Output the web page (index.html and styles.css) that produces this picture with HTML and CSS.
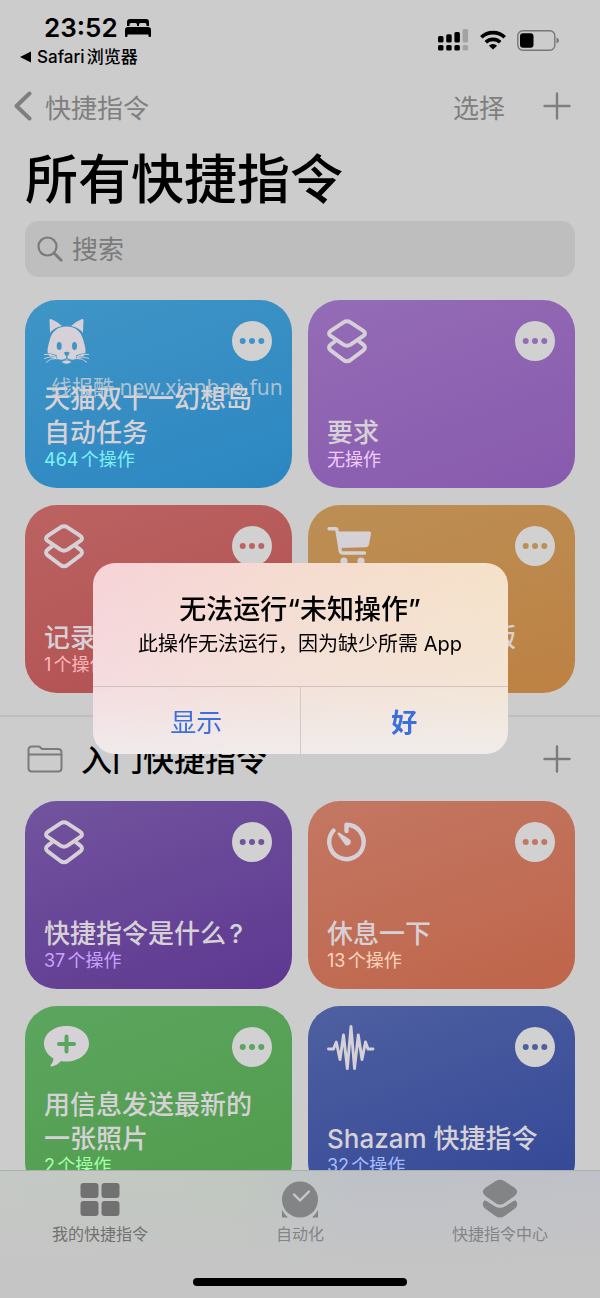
FILE: index.html
```html
<!DOCTYPE html>
<html lang="zh-CN">
<head>
    <meta charset="UTF-8" />
    <meta name="viewport" content="width=device-width, initial-scale=1.0" />
    <title>快捷指令</title>
    <link rel="stylesheet" href="styles.css">
</head>
<body>
    <svg class="sprite" aria-hidden="true">
      <symbol id="layers" viewBox="0 0 40 45">
        <g fill="none" stroke="currentColor" stroke-width="4" stroke-linejoin="round">
          <path d="M16.500 3.400Q20 1.200 23.500 3.400L36 11.600Q40 14.400 36 17.200L23.500 25.600Q20 27.800 16.500 25.600L4 17.200Q0 14.400 4 11.600Z" />
          <path d="M8.500 22L4 25.400Q0 28.500 4 31.600L16.500 41Q20 43.500 23.500 41L36 31.600Q40 28.500 36 25.400L31.500 22" />
        </g>
      </symbol>
      <symbol id="plus" viewBox="0 0 28 28">
        <path d="M14 1.500V26.500M1.500 14H26.500" fill="none" stroke="currentColor" stroke-width="2.400" stroke-linecap="round" />
      </symbol>
      <symbol id="dots" viewBox="0 0 40 40">
        <circle cx="10.700" cy="20" r="3" /><circle cx="20" cy="20" r="3" /><circle cx="29.300" cy="20" r="3" />
      </symbol>
    </svg>

    <div class="app">
      <main class="content">
        <header class="status">
          <div class="status-left">
            <div class="clock">
              23:52
              <svg width="26" height="18" viewBox="0 0 26 18">
                <path d="M2 7V3Q2 0 5 0H21Q24 0 24 3V7H21.500V5.500Q21.500 4 20 4H15.500Q14 4 14 5.500V7H12V5.500Q12 4 10.500 4H6Q4.500 4 4.500 5.500V7Z" />
                <path d="M0 11Q0 8 3 8H23Q26 8 26 11V17Q26 18 25 18H24.500Q23.500 18 23.500 17V15.500H2.500V17Q2.500 18 1.500 18H1Q0 18 0 17Z" />
              </svg>
            </div>
            <a class="back-app" href="#">
              <svg width="12" height="12" viewBox="0 0 12 12"><path d="M0 6L11 .5V11.500Z" /></svg>
              Safari浏览器
            </a>
          </div>
          <div class="status-right">
            <svg width="31" height="22" viewBox="0 0 31 22">
              <rect x="0" y="7" width="5.500" height="6.500" rx="1.500" />
              <rect x="8.200" y="5.200" width="5.500" height="8.300" rx="1.500" />
              <rect x="16.400" y="3" width="5.500" height="10.500" rx="1.500" />
              <rect x="0" y="16" width="5.500" height="5.500" rx="1.500" />
              <rect x="8.200" y="16" width="5.500" height="5.500" rx="1.500" />
              <rect x="16.400" y="16" width="5.500" height="5.500" rx="1.500" />
              <g fill="#a3a3a3">
                <rect x="24.600" y="0" width="5.500" height="13.500" rx="1.500" />
                <rect x="24.600" y="16" width="5.500" height="5.500" rx="1.500" />
              </g>
            </svg>
            <svg width="26" height="20" viewBox="0 0 26 20">
              <g fill="none" stroke="#000" stroke-width="3.600">
                <path d="M1.300 7.300A17 17 0 0 1 24.700 7.300" />
                <path d="M5.800 12.200A10.500 10.500 0 0 1 20.200 12.200" />
              </g>
              <path d="M13 19.500L8.900 15.700A6 6 0 0 1 17.100 15.700Z" />
            </svg>
            <svg width="42" height="21" viewBox="0 0 42 21">
              <rect x=".8" y=".8" width="37" height="19.400" rx="5" fill="none" stroke="#777" stroke-width="1.400" />
              <rect x="3" y="3.200" width="13.500" height="14.600" rx="3" />
              <path d="M39.500 7.500Q42 8.500 42 10.500T39.500 13.500Z" fill="#777" />
            </svg>
          </div>
        </header>

        <nav class="navbar">
          <a class="nav-back" href="#">
            <svg width="18" height="30" viewBox="0 0 18 30"><path d="M15.500 2.500L2.500 15L15.500 27.500" fill="none" stroke="currentColor" stroke-width="4" stroke-linecap="round" stroke-linejoin="round" /></svg>
            快捷指令
          </a>
          <div class="nav-actions">
            <button>选择</button>
            <button aria-label="新建"><svg width="28" height="28"><use href="#plus" /></svg></button>
          </div>
        </nav>

        <h1>所有快捷指令</h1>

        <label class="search">
          <svg width="26" height="26" viewBox="0 0 26 26"><g fill="none" stroke="currentColor" stroke-width="2.200" stroke-linecap="round"><circle cx="10.500" cy="10.500" r="9" /><path d="M17.200 17.200L24.200 24.200" stroke-width="2.800" /></g></svg>
          <input type="search" placeholder="搜索" aria-label="搜索" />
        </label>

        <section class="grid">
          <article class="card blue">
            <div class="card-top">
              <svg class="icon" width="46" height="45" viewBox="0 0 46 45">
                <path d="M6 12L5.500 1.500Q5.500 -.5 7.500 .3Q14 3 18 7Q10 8.500 6 14Z" />
                <path d="M39 12L39.500 1.500Q39.500 -.5 37.500 .3Q31 3 27 7Q35 8.500 39 14Z" />
                <path d="M22.500 7.500C32 7.500 37 13 39 20C40 24 41.500 28 41.500 32C41.500 38 35 41.500 22.500 41.500S3.500 38 3.500 32C3.500 28 5 24 6 20C8 13 13 7.500 22.500 7.500Z" />
                <g class="hole">
                  <ellipse cx="15.200" cy="27" rx="2.500" ry="4" /><ellipse cx="30.500" cy="27" rx="2.500" ry="4" />
                  <path d="M20 33.500Q22.800 32 25.600 33.500Q25 36.500 22.800 37.500Q20.600 36.500 20 33.500Z" />
                </g>
                <path class="hole-line" d="M2 34.500Q8 34.500 13 37M2 38.500Q8 37 13 39M43 34.500Q37 34.500 32 37M43 38.500Q37 37 32 39M22.800 37V39.500Q19 42.500 13 40.500M22.800 39.500Q27 42.500 33 40.500" fill="none" stroke-width="1.200" />
                <path d="M0 35.500Q5 34.500 11 37M0 39.500Q6 37 12 38.500M2 43.500Q6 39 12 39.500M45 35.500Q40 34.500 34 37M45 39.500Q39 37 33 38.500M43 43.500Q39 39 33 39.500" fill="none" stroke="currentColor" stroke-width=".9" />
                <path d="M17.500 43Q22.500 40.500 27.500 43Q22.500 46.500 17.500 43Z" />
              </svg>
              <button class="more" aria-label="更多"><svg width="40" height="40"><use href="#dots" /></svg></button>
            </div>
            <h3>天猫双十一幻想岛自动任务</h3>
            <p>464个操作</p>
            <span class="watermark">线报酷 new.xianbao.fun</span>
          </article>

          <article class="card purple">
            <div class="card-top">
              <svg class="icon" width="40" height="45"><use href="#layers" /></svg>
              <button class="more" aria-label="更多"><svg width="40" height="40"><use href="#dots" /></svg></button>
            </div>
            <h3>要求</h3>
            <p>无操作</p>
          </article>

          <article class="card red">
            <div class="card-top">
              <svg class="icon" width="40" height="45"><use href="#layers" /></svg>
              <button class="more" aria-label="更多"><svg width="40" height="40"><use href="#dots" /></svg></button>
            </div>
            <h3>记录</h3>
            <p>1个操作</p>
          </article>

          <article class="card orange">
            <div class="card-top">
              <svg class="icon" width="46" height="45" viewBox="0 0 46 45">
                <path d="M2 4.700H8.500Q9.800 4.700 10 6.500L13.300 27Q13.700 29 15.500 29H37.500" fill="none" stroke="currentColor" stroke-width="3.400" stroke-linecap="round" />
                <path d="M9 7.500H42.500Q44.300 7.500 44 9.500L42 20.500Q41.500 23 39 23.200L12 24Z" />
                <circle cx="17" cy="37" r="3.600" /><circle cx="34" cy="37" r="3.600" />
              </svg>
              <button class="more" aria-label="更多"><svg width="40" height="40"><use href="#dots" /></svg></button>
            </div>
            <h3>双十一 购物车版</h3>
            <p>5个操作</p>
          </article>
        </section>

        <section class="folder">
          <div class="folder-head">
            <svg width="36" height="28" viewBox="0 0 36 28"><path d="M1.500 5Q1.500 1.500 5 1.500H11Q12.500 1.500 13.500 2.500L15 4H31Q34.500 4 34.500 7.500V23Q34.500 26.500 31 26.500H5Q1.500 26.500 1.500 23ZM1.500 9.500H34.500" fill="none" stroke="currentColor" stroke-width="2" /></svg>
            <h2>入门快捷指令</h2>
            <button aria-label="新建"><svg width="28" height="28"><use href="#plus" /></svg></button>
          </div>

          <div class="grid">
            <article class="card violet">
              <div class="card-top">
                <svg class="icon" width="40" height="45"><use href="#layers" /></svg>
                <button class="more" aria-label="更多"><svg width="40" height="40"><use href="#dots" /></svg></button>
              </div>
              <h3>快捷指令是什么?</h3>
              <p>37个操作</p>
            </article>

            <article class="card coral">
              <div class="card-top">
                <svg class="icon" width="40" height="45" viewBox="0 0 40 45">
                  <path d="M19.500 11V4.700A17.200 17.200 0 1 1 6.500 10.600" fill="none" stroke="currentColor" stroke-width="4.400" stroke-linecap="round" stroke-linejoin="round" />
                  <path d="M10.500 14Q10.500 12 12.500 12.800L22.800 19.500A3.600 3.600 0 0 1 18.300 25Z" />
                </svg>
                <button class="more" aria-label="更多"><svg width="40" height="40"><use href="#dots" /></svg></button>
              </div>
              <h3>休息一下</h3>
              <p>13个操作</p>
            </article>

            <article class="card green">
              <div class="card-top">
                <svg class="icon" width="46" height="45" viewBox="0 0 46 45">
                  <path d="M22.500 1C35 1 45 8.500 45 18.500S35 36.500 22.500 36.500Q19.500 36.500 17 36Q13 40.500 7.500 41.500Q5.500 41.500 7 39.500Q9.500 36.500 9.500 33.500C4 30.500 0 25 0 18.500C0 8.500 10 1 22.500 1Z" />
                  <path class="hole-line" d="M22.500 11.500V26.500M15 19H30" fill="none" stroke-width="4" stroke-linecap="round" />
                </svg>
                <button class="more" aria-label="更多"><svg width="40" height="40"><use href="#dots" /></svg></button>
              </div>
              <h3>用信息发送最新的一张照片</h3>
              <p>2个操作</p>
            </article>

            <article class="card indigo">
              <div class="card-top">
                <svg class="icon" width="48" height="46" viewBox="0 0 48 46">
                  <path d="M1.500 24H6.500L9.300 17L13 34.500L16.500 10L20.300 43.500L24 1.500L27.500 43.500L31.300 10L35 34.500L38.500 17L41 24H46" fill="none" stroke="currentColor" stroke-width="2.900" stroke-linecap="round" stroke-linejoin="round" />
                </svg>
                <button class="more" aria-label="更多"><svg width="40" height="40"><use href="#dots" /></svg></button>
              </div>
              <h3>Shazam 快捷指令</h3>
              <p>32个操作</p>
            </article>
          </div>
        </section>
      </main>

      <footer class="tabbar">
        <nav class="tabs">
          <a class="tab active" href="#">
            <svg width="40" height="40" viewBox="0 0 40 40"><rect x=".5" y="4" width="18" height="15" rx="3" /><rect x="21.500" y="4" width="18" height="15" rx="3" /><rect x=".5" y="22" width="18" height="15" rx="3" /><rect x="21.500" y="22" width="18" height="15" rx="3" /></svg>
            我的快捷指令
          </a>
          <a class="tab" href="#">
            <svg width="40" height="40" viewBox="0 0 40 40">
              <circle cx="20" cy="20.500" r="18" />
              <path d="M2 31Q4 35 8 38.500H2ZM38 31Q36 35 32 38.500H38Z" />
              <path d="M14 15.500L20 21.500L29 12.500" fill="none" stroke="#c6cac9" stroke-width="2.400" stroke-linecap="round" stroke-linejoin="round" />
            </svg>
            自动化
          </a>
          <a class="tab" href="#">
            <svg width="40" height="42" viewBox="0 0 40 42">
              <path d="M15.500 2Q20 -.5 24.500 2L35 9Q41 13.500 35 18L24.500 25.500Q20 28.500 15.500 25.500L5 18Q-1 13.500 5 9Z" />
              <path d="M3.500 22.500Q5.500 22.500 7 23.800L14.500 28.500Q20 32 25.500 28.500L33 23.800Q34.500 22.500 36.500 22.500Q40.500 27.500 35 31.500L24.500 39Q20 42 15.500 39L5 31.500Q-.5 27.500 3.500 22.500Z" />
            </svg>
            快捷指令中心
          </a>
        </nav>
        <div class="home-bar"></div>
      </footer>
    </div>

    <div class="overlay">
      <div class="alert" role="alertdialog" aria-labelledby="alertTitle" aria-describedby="alertText">
        <div class="alert-body">
          <h2 id="alertTitle">无法运行“未知操作”</h2>
          <p id="alertText">此操作无法运行，因为缺少所需 App</p>
        </div>
        <div class="alert-buttons">
          <button>显示</button>
          <button class="primary">好</button>
        </div>
      </div>
    </div>
</body>
</html>
```

FILE: styles.css
```css
* {
    box-sizing: border-box;
}

body {
    margin: 0;
    background: #cccccc;
    color: #000;
    font-family: Inter, "Noto Sans CJK SC", sans-serif;
    text-autospace: normal;
}

h1, h2, h3, p {
    margin: 0;
}

a {
    color: inherit;
    text-decoration: none;
}

button {
    padding: 0;
    border: none;
    background: none;
    color: inherit;
    font: inherit;
    cursor: pointer;
}

svg {
    display: block;
    flex: none;
    fill: currentColor;
}

.sprite {
    position: absolute;
    width: 0;
    height: 0;
}

.app {
    display: flex;
    flex-direction: column;
    height: 100vh;
}

.content {
    flex: 1;
    min-height: 0;
    overflow: hidden;
}

/* status bar */
.status {
    display: flex;
    justify-content: space-between;
    height: 78px;
    padding: 13px 41px 0 20px;
}

.clock {
    display: flex;
    align-items: center;
    gap: 7px;
    padding-left: 24px;
    font-size: 26px;
    font-weight: 600;
    line-height: 30px;
}

.back-app {
    display: flex;
    align-items: center;
    gap: 5px;
    font-size: 17px;
    font-weight: 500;
    line-height: 28px;
}

.status-right {
    display: flex;
    align-items: center;
    gap: 11px;
    height: 54px;
}

/* navigation */
.navbar {
    display: flex;
    align-items: center;
    justify-content: space-between;
    height: 56px;
    padding: 0 29px 0 14px;
    color: #7f7f7f;
    font-size: 26px;
}

.nav-back {
    display: flex;
    align-items: center;
    gap: 13px;
}

.nav-actions {
    display: flex;
    align-items: center;
    gap: 38px;
}

h1 {
    padding: 14px 25px 0;
    font-size: 53px;
    font-weight: 500;
    line-height: 64px;
}

.search {
    display: flex;
    align-items: center;
    gap: 9px;
    height: 56px;
    margin: 9px 25px 23px;
    padding: 0 12px;
    border-radius: 14px;
    background: #bebebe;
    color: #7b7b7b;
}

.search input {
    flex: 1;
    min-width: 0;
    padding: 0;
    border: none;
    outline: none;
    background: none;
    color: #000;
    font: inherit;
    font-size: 26px;
}

.search input::placeholder {
    color: #7b7b7b;
}

/* shortcut cards */
.grid {
    display: grid;
    grid-template-columns: 1fr 1fr;
    gap: 17px 16px;
    padding: 0 25px;
}

.card {
    position: relative;
    display: flex;
    flex-direction: column;
    height: 188px;
    padding: 19px 20px 18px 19px;
    border-radius: 32px;
    background: linear-gradient(160deg, var(--from), var(--to));
    color: #d6d1d6;
}

.card-top {
    display: flex;
    justify-content: space-between;
    height: 45px;
    margin-bottom: auto;
}

.more {
    width: 40px;
    height: 40px;
    margin-top: 2px;
    border-radius: 50%;
    background: #d1d1d1;
    color: var(--from);
}

.hole {
    fill: var(--from);
}

.hole-line {
    stroke: var(--from);
}

.card h3 {
    font-size: 26px;
    font-weight: 500;
    line-height: 34px;
}

.card p {
    color: var(--note);
    font-size: 18px;
    line-height: 20px;
}

.blue { --from: #4095c6; --to: #2b86c1; --note: #7cf3fb; }
.purple { --from: #946cb6; --to: #885aae; --note: #f2ccff; }
.red { --from: #bb6362; --to: #b24e50; --note: #ffb6bd; }
.orange { --from: #bc8f55; --to: #bd8143; --note: #ffe0b0; }
.violet { --from: #72549e; --to: #5e3891; --note: #c9a2ff; }
.coral { --from: #c37763; --to: #bf654a; --note: #ffd5bd; }
.green { --from: #5ca55f; --to: #519c4d; --note: #a5ffa9; }
.indigo { --from: #4e60a0; --to: #334797; --note: #a9bdff; }

.watermark {
    position: absolute;
    top: 73px;
    left: 26px;
    color: rgba(205, 208, 214, 0.8);
    font-family: "Noto Sans", "Noto Sans CJK SC", sans-serif;
    font-size: 21px;
    line-height: 28px;
    white-space: nowrap;
}

/* folder section */
.folder {
    margin-top: 22px;
    border-top: 2px solid #bfbfbf;
}

.folder-head {
    display: flex;
    align-items: center;
    height: 84px;
    padding: 0 29px 0 27px;
    color: #7b7b7b;
}

.folder-head h2 {
    flex: 1;
    padding: 0 0 4px 18px;
    color: #000;
    font-size: 31px;
    font-weight: 500;
}

/* tab bar */
.tabbar {
    height: 128px;
    padding: 8px 0 0;
    border-top: 1px solid #adafaf;
    background: linear-gradient(to bottom, rgba(197, 197, 197, 0), #c5c5c5 75%), linear-gradient(to right, #c5c9c5, #c0c8c0 40%, #bdc0c8 60%, #c0c1c8);
}

.tabs {
    display: grid;
    grid-template-columns: repeat(3, 1fr);
}

.tab {
    display: flex;
    flex-direction: column;
    align-items: center;
    color: #828485;
    font-size: 16px;
    line-height: 30px;
}

.tab svg {
    height: 40px;
}

.tab.active {
    color: #707170;
}

.home-bar {
    width: 214px;
    height: 8px;
    margin: 29px auto 0;
    border-radius: 4px;
    background: #000;
}

/* alert */
.overlay {
    position: fixed;
    inset: 0;
    display: flex;
    align-items: center;
    justify-content: center;
    padding-top: 19px;
}

.alert {
    width: 415px;
    max-width: 90%;
    overflow: hidden;
    border-radius: 22px;
    background: linear-gradient(to bottom, rgba(240, 237, 238, 0), rgba(240, 237, 238, 0.3) 60%, rgba(240, 237, 238, 0.9)), linear-gradient(to right, #f7d3d8, #f5dccf 50%, #f5e1c8);
    text-align: center;
}

.alert-body {
    padding: 30px 20px 25px;
    line-height: 34px;
}

.alert h2 {
    font-size: 27px;
    font-weight: 500;
}

.alert p {
    font-size: 20px;
}

.alert-buttons {
    display: grid;
    grid-template-columns: 1fr 1fr;
    border-top: 1px solid #d3c0bc;
}

.alert-buttons button {
    height: 67px;
    color: #3a70dc;
    font-size: 26px;
}

.alert-buttons .primary {
    border-left: 1px solid #d3c8c8;
    font-weight: 600;
}
```
